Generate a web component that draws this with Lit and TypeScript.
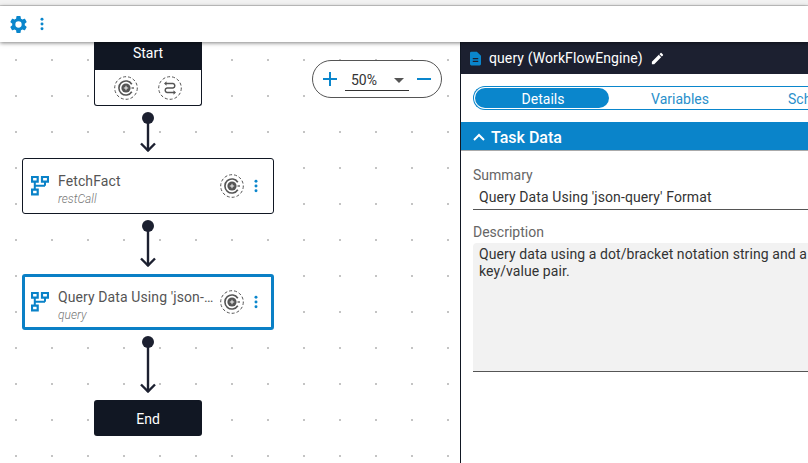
import { LitElement, html, css, svg } from "lit";
import { customElement, property } from "lit/decorators.js";

const runIcon = svg`<circle cx="12" cy="12" r="11.3" fill="none" stroke="#555" stroke-width="1" stroke-dasharray="3 2"/>
<path d="M17.800 8.200A7 7 0 1 0 17.800 15.800" fill="none" stroke="#555" stroke-width="1.600"/>
<circle cx="12" cy="12" r="4.600" fill="#555"/><path d="M9.800 12h4.400M12 9.800v4.400" stroke="#fff" stroke-width=".9"/>
<path d="M17.500 12h2.500" stroke="#555" stroke-width="1.300"/>`;
const loopIcon = svg`<circle cx="12" cy="12" r="11.3" fill="none" stroke="#555" stroke-width="1" stroke-dasharray="3 2"/>
<path d="M8 7.500H15a2.300 2.300 0 0 1 0 4.500H9a2.300 2.300 0 0 0 0 4.500H16" fill="none" stroke="#555" stroke-width="1.500"/>
<path d="M8.500 5.300 6 7.500 8.500 9.700zM15.500 14.300 18 16.500 15.500 18.700z" fill="#555"/>`;
const treeIcon = svg`<path d="M1 1h5.700v4.700H1zM11 1h6v4.700h-6zM1 13.600h5.700v4.700H1z" fill="none" stroke="#0a82c8" stroke-width="2.200"/><path d="M3.800 6v7.500M3.800 9.700h10.200M14 6v3.700" fill="none" stroke="#0a82c8" stroke-width="2"/>`;
const kebab = html`<svg class="kebab" viewBox="0 0 4 16" width="4" height="14"><circle cx="2" cy="2.500" r="1.700"/><circle cx="2" cy="8" r="1.700"/><circle cx="2" cy="13.500" r="1.700"/></svg>`;

@customElement("flow-arrow")
class FlowArrow extends LitElement {
  @property({ type: Number }) len = 40;
  static styles = css`
    :host { display: block; width: 20px; }
    svg { display: block; }
  `;
  render() {
    const h = this.len;
    return html`<svg width="20" height=${h} viewBox="0 0 20 ${h}">
      <circle cx="10" cy="6" r="6" fill="#1c2030"/>
      <path d="M10 8V${h - 1}" stroke="#1c2030" stroke-width="2.400"/>
      <path d="M3 ${h - 8.500} 10 ${h - 1.500} 17 ${h - 8.500}" fill="none" stroke="#1c2030" stroke-width="2.400"/>
    </svg>`;
  }
}

@customElement("app-root")
export class AppRoot extends LitElement {
  static styles = css`
    :host { display: block; width: 808px; height: 463px; overflow: hidden; position: relative; font-family: Roboto, "Liberation Sans", sans-serif; background: #fff; }
    .strip { height: 5px; background: #f2f2f2; border-bottom: 1px solid #cfcfcf; }
    .toolbar { height: 36px; background: #fff; display: flex; align-items: center; gap: 11px; padding-left: 8px; box-shadow: 0 1px 4px rgba(0,0,0,.5); position: relative; z-index: 3; }
    .toolbar svg { fill: #0a86cc; display: block; }
    .main { display: flex; height: 421px; }
    .canvas { width: 460px; flex: none; position: relative; overflow: hidden;
      background-color: #fff;
      background-image: radial-gradient(circle at 1px 1px, #c4c4c4 1px, transparent 1.2px);
      background-size: 36px 36px; background-position: 15px 17px; }
    .flow { position: absolute; left: 22px; top: 0; width: 252px; display: flex; flex-direction: column; align-items: center; }
    .start { width: 108px; height: 64px; box-sizing: border-box; border: 1px solid #111723; border-top: 0; border-radius: 0 0 3px 3px; background: #fff; }
    .cap { background: #111723; color: #fff; font-size: 14px; height: 22px; padding-bottom: 6px; display: flex; align-items: center; justify-content: center; margin: 0 -1px; }
    .start .tools { display: flex; justify-content: center; gap: 20px; padding-top: 6px; }
    .circ { width: 24px; height: 24px; display: block; flex: none; }
    flow-arrow { margin-top: 6px; }
    .task { width: 252px; height: 56px; box-sizing: border-box; background: #fff; border: 1px solid #111723; border-radius: 3px; display: flex; align-items: center; padding: 0 15px 0 8px; margin-top: 6px; }
    .task.sel { border: 3px solid #0a80c6; padding: 0 13px 0 6px; margin-top: 7px; }
    .task .tree { width: 18px; height: 20px; flex: none; margin-right: 9px; }
    .info { flex: 1; min-width: 0; padding-top: 7px; }
    .name { font-size: 14px; color: #555; line-height: 17px; white-space: nowrap; overflow: hidden; text-overflow: ellipsis; letter-spacing: .1px; }
    .type { font-size: 12px; color: #777; font-style: italic; line-height: 15px; font-weight: 300; margin-top: 2px; }
    .task .circ { margin: 0 9px 0 5px; }
    .kebab { fill: #0a86cc; flex: none; margin: 0 0 0 1px; }
    .end { width: 108px; height: 36px; box-sizing: border-box; padding-top: 2px; margin-top: 7px; background: #111723; color: #fff; border-radius: 3px; font-size: 14px; display: flex; align-items: center; justify-content: center; }
    .zoom { position: absolute; left: 312px; top: 18px; width: 130px; height: 38px; box-sizing: border-box; border: 1px solid #555; border-radius: 19px; background: #fff; display: flex; align-items: center; padding: 0 9px; }
    .zoom svg.pm { width: 16px; height: 16px; flex: none; stroke: #0a86cc; stroke-width: 2; margin-top: -1px; }
    .sel-box { width: 64px; height: 28px; box-sizing: border-box; margin: 0 7px 4px 7px; border-bottom: 1px solid #333; display: flex; align-items: center; justify-content: space-between; padding: 6px 5px 0 6px; font-size: 14px; color: #333; }
    .caret { width: 0; height: 0; border: 5px solid transparent; border-top: 5px solid #555; border-bottom: 0; margin-top: 2px; }
    .panel { flex: 1; min-width: 0; border-left: 1px solid #111723; background: #fff; overflow: hidden; position: relative; z-index: 1; }
    .phead { height: 32px; background: #1c2030; color: #fff; display: flex; align-items: center; font-size: 14px; letter-spacing: .1px; padding-left: 9px; white-space: nowrap; }
    .phead .doc { fill: #0a86cc; width: 11px; height: 15px; margin-right: 8px; }
    .phead .pen { fill: #fff; width: 15px; height: 15px; margin-left: 7px; }
    .tabs { margin: 12px -60px 0 12px; height: 24px; box-sizing: border-box; border: 1px solid #0a86cc; border-right: 0; border-radius: 12px 0 0 12px; padding: 1px; display: flex; align-items: stretch; font-size: 14px; color: #2a8fcb; }
    .tab { flex: none; display: flex; align-items: center; justify-content: center; padding-top: 1px; box-sizing: border-box; }
    .tab.on { background: #0a86cc; color: #fff; border-radius: 10px; width: 134px; padding-left: 2px; }
    .tab.mid { width: 142px; }
    .tab.third { padding-left: 37px; }
    .sect { margin-top: 12px; height: 26px; padding-top: 2px; background: #0a84ca; color: #fff; border-bottom: 1px solid #aaa; display: flex; align-items: center; padding-left: 12px; font-size: 16px; font-weight: 500; }
    .sect svg { width: 12px; height: 8px; margin-right: 6px; stroke: #fff; fill: none; stroke-width: 2; }
    .body { padding: 0 0 0 12px; margin-right: -40px; }
    .lbl { font-size: 14px; color: #666; line-height: 17px; }
    .lbl.a { margin-top: 16px; }
    .lbl.b { margin-top: 14px; }
    .input { height: 24px; margin-top: 1px; border-bottom: 1px solid #555; font-size: 14px; color: #333; padding-left: 6px; display: flex; align-items: center; letter-spacing: .1px; }
    .area { margin-top: 2px; height: 129px; box-sizing: border-box; background: #f2f2f2; border-bottom: 1px solid #555; border-radius: 4px 4px 0 0; font-size: 14px; line-height: 17px; letter-spacing: .08px; color: #333; padding: 3px 6px 0; width: 374px; }
  `;

  render() {
    return html`
      <div class="strip"></div>
      <div class="toolbar">
        <svg viewBox="0 0 24 24" width="21" height="21"><path d="M19.140 12.940c.04-.3.060-.61.060-.94s-.02-.64-.07-.94l2.030-1.580a.49.49 0 0 0 .12-.61l-1.920-3.320a.49.49 0 0 0-.59-.22l-2.390.96c-.5-.38-1.030-.7-1.620-.94l-.36-2.540a.48.48 0 0 0-.48-.41h-3.840a.48.48 0 0 0-.47.41l-.36 2.540c-.59.24-1.130.57-1.620.94l-2.390-.96a.49.49 0 0 0-.59.22L2.740 8.870a.48.48 0 0 0 .12.61l2.030 1.580c-.05.3-.09.63-.09.94s.02.64.07.94l-2.030 1.580a.49.49 0 0 0-.12.61l1.920 3.320c.12.22.37.29.59.22l2.390-.96c.5.38 1.030.7 1.620.94l.36 2.540c.05.24.24.41.48.41h3.840c.24 0 .44-.17.47-.41l.36-2.540c.59-.24 1.130-.56 1.620-.94l2.390.96c.22.08.47 0 .59-.22l1.920-3.320a.48.48 0 0 0-.12-.61l-2.010-1.580zM12 15.600a3.600 3.600 0 1 1 0-7.200 3.600 3.600 0 0 1 0 7.200z"/></svg>
        <svg viewBox="0 0 4 16" width="4" height="14"><circle cx="2" cy="2.500" r="1.700"/><circle cx="2" cy="8" r="1.700"/><circle cx="2" cy="13.500" r="1.700"/></svg>
      </div>
      <div class="main">
        <div class="canvas">
          <div class="flow">
            <div class="start">
              <div class="cap">Start</div>
              <div class="tools">
                <svg class="circ" viewBox="0 0 24 24">${runIcon}</svg>
                <svg class="circ" viewBox="0 0 24 24">${loopIcon}</svg>
              </div>
            </div>
            <flow-arrow .len=${40}></flow-arrow>
            <div class="task">
              <svg class="tree" viewBox="0 0 18 20">${treeIcon}</svg>
              <div class="info"><div class="name">FetchFact</div><div class="type">restCall</div></div>
              <svg class="circ" viewBox="0 0 24 24">${runIcon}</svg>
              ${kebab}
            </div>
            <flow-arrow .len=${47}></flow-arrow>
            <div class="task sel">
              <svg class="tree" viewBox="0 0 18 20">${treeIcon}</svg>
              <div class="info"><div class="name">Query Data Using 'json-query' Format</div><div class="type">query</div></div>
              <svg class="circ" viewBox="0 0 24 24">${runIcon}</svg>
              ${kebab}
            </div>
            <flow-arrow .len=${57}></flow-arrow>
            <div class="end">End</div>
          </div>
          <div class="zoom">
            <svg class="pm" viewBox="0 0 16 16"><path d="M1 8h14M8 1v14"/></svg>
            <div class="sel-box"><span>50%</span><span class="caret"></span></div>
            <svg class="pm" viewBox="0 0 16 16"><path d="M1 8h14"/></svg>
          </div>
        </div>
        <div class="panel">
          <div class="phead">
            <svg class="doc" viewBox="0 0 12 15"><path d="M1.500 0H7.500L12 4.500V13.500A1.500 1.500 0 0 1 10.500 15H1.500A1.500 1.500 0 0 1 0 13.500V1.500A1.500 1.500 0 0 1 1.500 0ZM3 7v1.200H9V7ZM3 10v1.200H9V10Z" fill-rule="evenodd"/></svg>
            query (WorkFlowEngine)
            <svg class="pen" viewBox="0 0 24 24"><path d="M3 17.250V21h3.750L17.810 9.940l-3.750-3.750L3 17.250zM20.710 7.040a1 1 0 0 0 0-1.410l-2.340-2.340a1 1 0 0 0-1.410 0l-1.830 1.830 3.750 3.750 1.830-1.830z"/></svg>
          </div>
          <div class="tabs">
            <div class="tab on">Details</div>
            <div class="tab mid">Variables</div>
            <div class="tab third">Schema</div>
          </div>
          <div class="sect"><svg viewBox="0 0 12 8"><path d="M1 7 6 2l5 5"/></svg>Task Data</div>
          <div class="body">
            <div class="lbl a">Summary</div>
            <div class="input">Query Data Using 'json-query' Format</div>
            <div class="lbl b">Description</div>
            <div class="area">Query data using a dot/bracket notation string and a key/value pair.</div>
          </div>
        </div>
      </div>
    `;
  }
}
void FlowArrow;
